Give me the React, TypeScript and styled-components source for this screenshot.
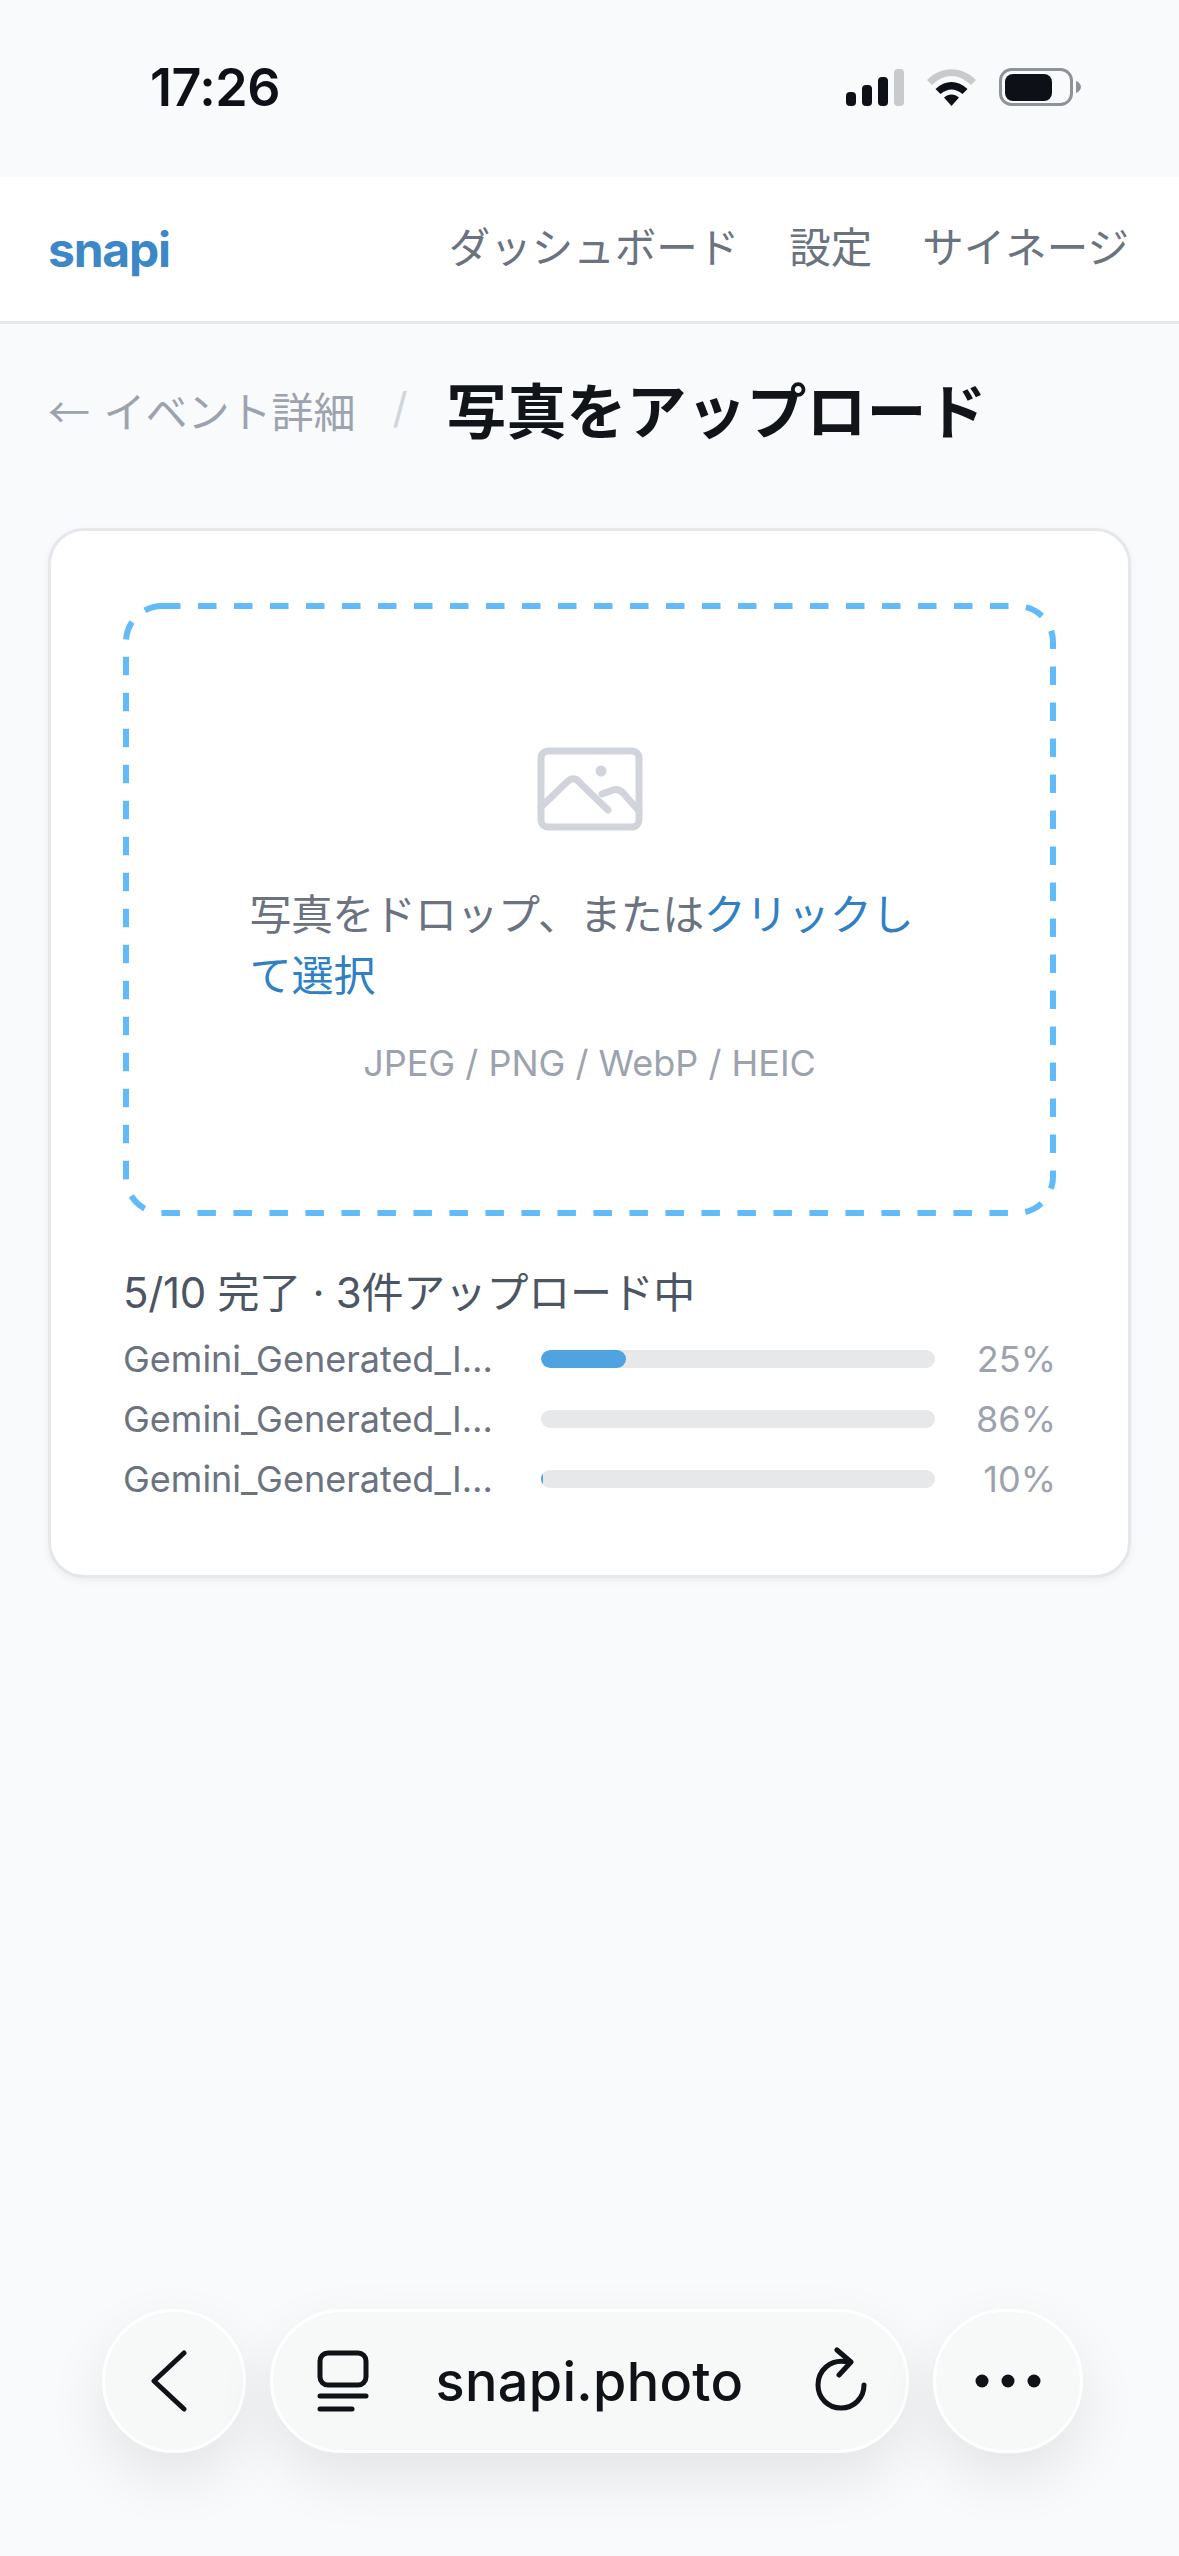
import { createGlobalStyle, styled } from 'styled-components';

const GlobalStyle = createGlobalStyle`
  html, body {
    margin: 0;
    padding: 0;
    background: #f9fafb;
  }
  body {
    font-family: "Inter", "Noto Sans CJK JP", sans-serif;
    color: #111827;
  }
  * {
    box-sizing: border-box;
  }
`;

const Page = styled.div`
  display: flex;
  flex-direction: column;
  min-height: 2556px;
  background: #f9fafb;
`;

const StatusBar = styled.div`
  display: flex;
  align-items: center;
  justify-content: space-between;
  height: 177px;
  padding: 0 98px 3px 150px;
`;

const Clock = styled.span`
  font-family: "Inter", sans-serif;
  font-size: 52px;
  font-weight: 600;
  color: #0d1117;
  letter-spacing: -0.5px;
`;

const StatusIcons = styled.div`
  display: flex;
  align-items: center;
  gap: 23px;
`;

const NavBar = styled.nav`
  display: flex;
  align-items: center;
  justify-content: space-between;
  height: 147px;
  padding: 0 48px;
  background: #fff;
  border-bottom: 3px solid #e5e7eb;
`;

const Logo = styled.span`
  font-size: 48px;
  font-weight: 700;
  color: #3b87c7;
  letter-spacing: -1.2px;
`;

const NavLinks = styled.div`
  display: flex;
  gap: 50px;
  padding: 0 2px 9px 0;
`;

const NavLink = styled.a`
  font-size: 41.500px;
  color: #6b7280;
`;

const TitleRow = styled.div`
  display: flex;
  align-items: center;
  height: 204px;
  padding: 0 48px 38px;
`;

const BackLink = styled.a`
  padding-top: 5px;
  font-family: "Noto Sans CJK JP", sans-serif;
  font-size: 42px;
  word-spacing: 4px;
  color: #9ca3af;
`;

const Slash = styled.span`
  margin: 0 39px 0 37px;
  font-size: 42px;
  color: #d1d5db;
`;

const Title = styled.h1`
  margin: 0;
  font-size: 60px;
  font-weight: 700;
  color: #111418;
`;

const Card = styled.section`
  display: flex;
  flex-direction: column;
  margin: 0 48px;
  padding: 72px 72px 69px;
  background: #fff;
  border: 3px solid #e5e7eb;
  border-radius: 36px;
  box-shadow: 0 3px 9px rgba(0, 0, 0, 0.05);
`;

const DropZone = styled.div`
  position: relative;
  display: flex;
  flex-direction: column;
  align-items: center;
  height: 613px;
  padding-top: 144px;
`;

const DashedOutline = styled.svg`
  position: absolute;
  inset: 0;
  width: 100%;
  height: 100%;
`;

const DropText = styled.p`
  width: 680px;
  margin: 53px 0 0;
  font-size: 42px;
  line-height: 61px;
  letter-spacing: -0.600px;
  color: #6b7280;
`;

const DropLink = styled.span`
  letter-spacing: 0;
  color: #2f80c4;
`;

const Formats = styled.p`
  margin: 30px 0 0;
  font-size: 36px;
  line-height: 54px;
  color: #9ca3af;
`;

const ProgressSummary = styled.p`
  margin: 45px 0 0;
  font-size: 42px;
  line-height: 63px;
  letter-spacing: -0.300px;
  color: #4b5563;
`;

const ProgressList = styled.div`
  display: flex;
  flex-direction: column;
  gap: 6px;
  margin-top: 8px;
`;

const ProgressRow = styled.div`
  display: grid;
  grid-template-columns: 394px 394px 1fr;
  column-gap: 24px;
  align-items: center;
  height: 54px;
`;

const FileName = styled.span`
  font-size: 36px;
  color: #6b7280;
  white-space: nowrap;
`;

const Track = styled.div`
  height: 18px;
  overflow: hidden;
  background: #e7e8ea;
  border-radius: 9px;
`;

const Fill = styled.div`
  height: 100%;
  background: #4fa3e0;
  border-radius: 9px;
`;

const Percent = styled.span`
  font-size: 36px;
  color: #9ca3af;
  text-align: right;
`;

const BrowserBar = styled.div`
  display: flex;
  align-items: stretch;
  gap: 24px;
  height: 144px;
  margin: auto 97px 103px 102px;
`;

const RoundButton = styled.div<{ $width: number }>`
  display: flex;
  align-items: center;
  justify-content: center;
  flex: 0 0 ${(p) => p.$width}px;
  background: #f7f8f8;
  border: 3px solid #fff;
  border-radius: 72px;
  box-shadow: 0 24px 60px rgba(0, 0, 0, 0.09);
`;

const BackButton = styled(RoundButton)`
  padding-right: 10px;
`;

const AddressPill = styled(RoundButton)`
  justify-content: space-between;
  padding: 0 39px 0 44px;
`;

const Address = styled.span`
  margin-right: 5px;
  font-size: 54px;
  font-weight: 500;
  letter-spacing: 0.300px;
  color: #0f1318;
`;

const ReloadSvg = styled.svg`
  margin-bottom: 4px;
`;

const SignalIcon = () => (
  <svg width="58" height="37" viewBox="0 0 58 37">
    <rect x="0" y="23" width="10" height="14" rx="4" fill="#0d1117" />
    <rect x="16" y="16" width="10" height="21" rx="4" fill="#0d1117" />
    <rect x="32" y="8" width="10" height="29" rx="4" fill="#0d1117" />
    <rect x="48" y="0" width="10" height="37" rx="4" fill="#c9cacc" />
  </svg>
);

const WifiIcon = () => (
  <svg width="49" height="37" viewBox="0 0 49 37">
    <path d="M0 11 C14 -3.500 35 -3.500 49 11 L44 16 C31 4 18 4 5 16 Z" fill="#c9cacc" />
    <path d="M8.500 20 C18 10.500 31 10.500 40.500 20 L35.500 25 C28 19 21 19 13.500 25 Z" fill="#0d1117" />
    <path d="M17 28.500 C21.500 24.500 27.500 24.500 32 28.500 L24.500 37 Z" fill="#0d1117" />
  </svg>
);

const BatteryIcon = () => (
  <svg width="82" height="38" viewBox="0 0 82 38">
    <rect x="1.500" y="1.500" width="71" height="35" rx="11" fill="none" stroke="#8e9299" strokeWidth="3" />
    <rect x="6" y="6" width="47" height="27" rx="8" fill="#0d1117" />
    <path d="M77 13 C80 14 82 16.500 82 19 C82 21.500 80 24 77 25 Z" fill="#8e9299" />
  </svg>
);

const PhotoIcon = () => (
  <svg width="106" height="84" viewBox="0 0 106 84" fill="none" stroke="#d1d5db" strokeWidth="7" strokeLinecap="round" strokeLinejoin="round">
    <rect x="4" y="4" width="98" height="76" rx="7" />
    <path d="M4 60 L30 35 Q37 28 43 36 L71 63" />
    <path d="M65 47 L76 43 Q82 41 87 47 L102 64" />
    <circle cx="64" cy="24" r="5.500" fill="#d1d5db" stroke="none" />
  </svg>
);

const ChevronIcon = () => (
  <svg width="38" height="62" viewBox="0 0 38 62" fill="none" stroke="#0f1318" strokeWidth="5" strokeLinecap="round" strokeLinejoin="round">
    <path d="M34 3 L4 31 L34 59" />
  </svg>
);

const TabsIcon = () => (
  <svg width="52" height="62" viewBox="0 0 52 62" fill="none" stroke="#0f1318" strokeWidth="5" strokeLinecap="round">
    <rect x="3" y="3" width="46" height="32" rx="8" />
    <path d="M3 46 L49 46" />
    <path d="M3 59 L35 59" />
  </svg>
);

const ReloadIcon = () => (
  <ReloadSvg width="52" height="64" viewBox="0 0 52 64" fill="none" stroke="#0f1318" strokeWidth="5" strokeLinecap="round" strokeLinejoin="round">
    <path d="M33 15 C15 11 3 24 3 38 C3 51 13 61 26 61 C39 61 49 51 49 38" />
    <path d="M22 3 L36 15 L24 28" />
  </ReloadSvg>
);

const DotsIcon = () => (
  <svg width="66" height="14" viewBox="0 0 66 14" fill="#0f1318">
    <circle cx="7" cy="7" r="6.500" />
    <circle cx="33" cy="7" r="6.500" />
    <circle cx="59" cy="7" r="6.500" />
  </svg>
);

const uploads = [
  { id: 1, percent: 25, bar: 21.6 },
  { id: 2, percent: 86, bar: 0 },
  { id: 3, percent: 10, bar: 0.5 },
];

export default function App() {
  return (
    <Page>
      <GlobalStyle />
      <StatusBar>
        <Clock>17:26</Clock>
        <StatusIcons>
          <SignalIcon />
          <WifiIcon />
          <BatteryIcon />
        </StatusIcons>
      </StatusBar>
      <NavBar>
        <Logo>snapi</Logo>
        <NavLinks>
          <NavLink>ダッシュボード</NavLink>
          <NavLink>設定</NavLink>
          <NavLink>サイネージ</NavLink>
        </NavLinks>
      </NavBar>
      <TitleRow>
        <BackLink>← イベント詳細</BackLink>
        <Slash>/</Slash>
        <Title>写真をアップロード</Title>
      </TitleRow>
      <Card>
        <DropZone>
          <DashedOutline>
            <rect x="3" y="3" width="calc(100% - 6px)" height="calc(100% - 6px)" rx="36" fill="none" stroke="#60bbf8" strokeWidth="6" strokeDasharray="18.500 17.500" />
          </DashedOutline>
          <PhotoIcon />
          <DropText>
            写真をドロップ、または<DropLink>クリックして選択</DropLink>
          </DropText>
          <Formats>JPEG / PNG / WebP / HEIC</Formats>
        </DropZone>
        <ProgressSummary>5/10 完了 · 3件アップロード中</ProgressSummary>
        <ProgressList>
          {uploads.map((upload) => (
            <ProgressRow key={upload.id}>
              <FileName>Gemini_Generated_I…</FileName>
              <Track>
                <Fill style={{ width: `${upload.bar}%` }} />
              </Track>
              <Percent>{upload.percent}%</Percent>
            </ProgressRow>
          ))}
        </ProgressList>
      </Card>
      <BrowserBar>
        <BackButton $width={144}>
          <ChevronIcon />
        </BackButton>
        <AddressPill $width={639}>
          <TabsIcon />
          <Address>snapi.photo</Address>
          <ReloadIcon />
        </AddressPill>
        <RoundButton $width={150}>
          <DotsIcon />
        </RoundButton>
      </BrowserBar>
    </Page>
  );
}
